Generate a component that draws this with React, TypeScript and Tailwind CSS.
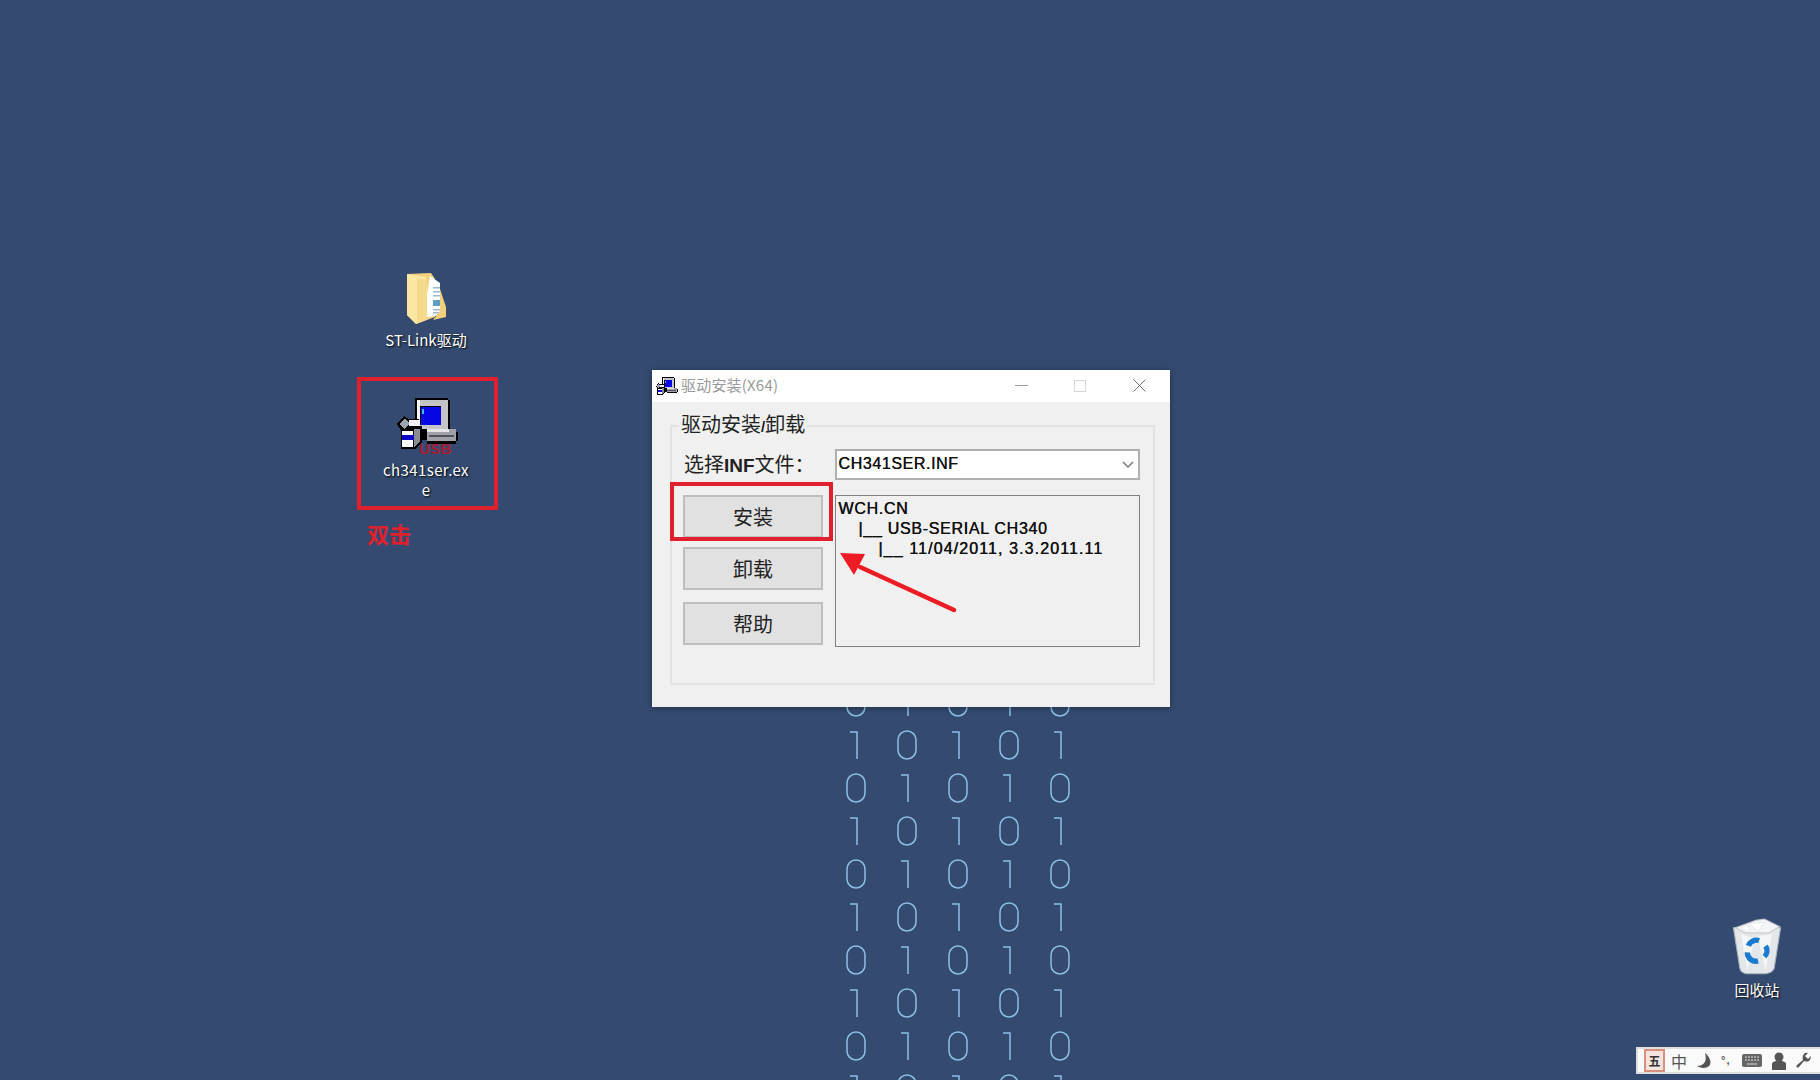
const cjk = "font-['Noto_Sans_CJK_SC','Liberation_Sans',sans-serif]";
const mono = "font-['Liberation_Sans','Noto_Sans_CJK_SC',sans-serif]";

function BinaryRain() {
  const cols = [856, 907, 958, 1009, 1060];
  const rows = Array.from({ length: 11 }, (_, i) => i);
  return (
    <svg className="absolute left-0 top-0" width="1820" height="1080" fill="none" stroke="#8cc0e6" strokeWidth="1.5">
      {rows.map((r) =>
        cols.map((x, c) => {
          const y = 688 + r * 43;
          return (r + c) % 2 === 0 ? (
            <rect key={`${r}-${c}`} x={x - 9} y={y} width="18" height="28" rx="9" />
          ) : (
            <path key={`${r}-${c}`} d={`M${x - 6} ${y + 1}H${x + 1}V${y + 28}`} />
          );
        })
      )}
    </svg>
  );
}

function FolderIcon() {
  return (
    <svg width="60" height="65" viewBox="0 0 60 65">
      <path d="M12 9L36 8L40 14V52L21 59L12 50Z" fill="#f3d27f" />
      <path d="M35 11L45 18V50L28 53Z" fill="#fff" />
      <path d="M38 22h7v1.5h-7zM38 26h7v1.5h-7zM38 30h7v1.5h-7zM38 44h8v1.5h-8zM38 47h8v1.5h-8z" fill="#9db8cf" />
      <path d="M38 35h8v6h-8z" fill="#5f9fc7" />
      <path d="M12 9L31 12V55L21 59L12 50Z" fill="#fbe6a2" />
      <path d="M22 13L32 15V54L22 58Z" fill="#f6da8c" />
      <path d="M45 24L51 42V52L38 55L45 46Z" fill="#f0cf78" />
    </svg>
  );
}

function SetupGlyph() {
  // the old 16-colour installer icon, monitor with a box in front
  return (
    <g shapeRendering="crispEdges">
      <path d="M30 13h33v2h2v29h6v3h2v9h-2v3H42v-4H32v-7h-2Z" fill="#000" />
      <rect x="32" y="15" width="31" height="29" fill="#c4c4c8" />
      <rect x="32" y="15" width="3" height="29" fill="#f4f4f5" />
      <rect x="35" y="21" width="21" height="19" fill="#000" />
      <rect x="36" y="22" width="20" height="18" fill="#0505e6" />
      <rect x="37" y="24" width="2" height="5" fill="#38bdf8" />
      <rect x="42" y="44" width="29" height="12" fill="#a1a1aa" />
      <rect x="42" y="44" width="22" height="3" fill="#e4e4e7" />
      <rect x="44" y="50" width="25" height="2" fill="#52525b" />
      <path d="M12 39l7-8 5 3h10v7h3v17l-7 6H16V46Z" fill="#000" />
      <path d="M14 39l6-6 5 6-6 5Z" fill="#9ca3af" />
      <rect x="24" y="35" width="10" height="6" fill="#f4f4f5" />
      <rect x="17" y="46" width="11" height="5" fill="#fff" />
      <rect x="17" y="50" width="14" height="5" fill="#0a0ac8" />
      <rect x="17" y="55" width="11" height="7" fill="#fff" />
      <path d="M29 44h6v12l-6 6Z" fill="#8b8b94" />
    </g>
  );
}

function SetupIcon() {
  return (
    <div className="relative h-[70px] w-[80px]">
      <svg width="80" height="70" viewBox="0 0 80 70">
        <SetupGlyph />
      </svg>
      <span className={`absolute left-[34px] top-[56px] text-[15px] leading-[15px] font-bold tracking-[0.5px] text-[#a81c34] ${mono}`}>
        USB
      </span>
    </div>
  );
}

function RecycleBin() {
  return (
    <svg width="54" height="60" viewBox="0 0 50 56">
      <path d="M3 10L9 48Q10 52 15 53H33Q39 52 41 48L47 10Z" fill="#e4e7ea" stroke="#aab2b9" strokeWidth="1" />
      <path d="M5 10L24 3L32 2L46 9L36 15L14 15Z" fill="#f4f5f6" stroke="#c2c7cc" strokeWidth="1" />
      <path d="M10 16L16 50L23 20ZM26 18L33 50L39 16Z" fill="#f4f5f7" />
      <path d="M18 6l8 8 6-9ZM10 10l9 5-3-8Z" fill="#fff" stroke="#d4d8dc" strokeWidth="0.5" />
      <g fill="none" stroke="#1a7ad0" strokeWidth="5">
        <path d="M17 27A8 8 0 0 1 27 22" />
        <path d="M33 27A8 8 0 0 1 32 37" />
        <path d="M26 41A8 8 0 0 1 16 33" />
      </g>
    </svg>
  );
}

function DesktopLabel({ children, className }: { children: React.ReactNode; className: string }) {
  return (
    <div className={`absolute text-center text-[15px] leading-[20px] text-white [text-shadow:1px_1px_2px_#000] ${cjk} ${className}`}>
      {children}
    </div>
  );
}

function DialogButton({ label, className = "" }: { label: string; className?: string }) {
  return (
    <button className={`flex h-[43px] w-[140px] items-center justify-center border-2 border-[#bebebe] bg-[#e1e1e1] text-[20px] text-[#222] ${cjk} ${className}`}>
      {label}
    </button>
  );
}

function Dialog() {
  return (
    <div className="absolute left-[652px] top-[370px] flex h-[337px] w-[518px] flex-col bg-[#f0f0f0] shadow-[0_1px_6px_rgba(0,0,0,0.35)]">
      <div className="flex h-[32px] items-center bg-white pb-[1px] pl-[4px]">
        <svg width="22" height="21" viewBox="12 10 62 54">
          <SetupGlyph />
        </svg>
        <span className={`ml-[3px] text-[15px] tracking-[0.2px] text-[#999] ${cjk}`}>驱动安装(X64)</span>
        <div className="ml-auto flex items-center pr-[24px]">
          <div className="mr-[46px] h-px w-[13px] bg-[#9a9a9a]" />
          <div className="mr-[47px] h-[12px] w-[12px] border border-[#d8d8d8]" />
          <svg width="13" height="13" viewBox="0 0 13 13" stroke="#777" strokeWidth="1">
            <path d="M.5.5l12 12M12.5.5l-12 12" />
          </svg>
        </div>
      </div>
      <div className="relative mx-[18px] mt-[23px] h-[260px] w-[485px] border-2 border-[#e3e3e3] pl-[11px] pr-[13px] pt-[22px]">
        <div className={`absolute left-[7px] top-[-17px] bg-[#f0f0f0] px-[2px] text-[20px] leading-[28px] text-[#222] ${cjk}`}>
          驱动安装<span className={`font-bold text-[15px] ${mono}`}>/</span>卸载
        </div>
        <div className="flex items-center">
          <div className={`w-[153px] pl-[1px] text-[20px] leading-[28px] text-[#222] ${cjk}`}>
            选择<span className={`font-bold text-[19px] ${mono}`}>INF</span>文件：
          </div>
          <div className={`flex h-[31px] w-[306px] items-center justify-between border-2 border-[#b0b0b0] bg-white pb-[2px] pl-[1px] pr-[4px] text-[16px] tracking-[0.6px] text-[#111] [text-shadow:0.4px_0_0_#111] ${mono}`}>
            CH341SER.INF
            <svg className="mt-[2px]" width="12" height="8" viewBox="0 0 12 8" fill="none" stroke="#777" strokeWidth="1.5">
              <path d="M1 1l5 5 5-5" />
            </svg>
          </div>
        </div>
        <div className="mt-[15px] flex">
          <div className="flex w-[153px] flex-col gap-[12px]">
            <DialogButton label="安装" className="mb-[-3px]" />
            <DialogButton label="卸载" />
            <DialogButton label="帮助" />
          </div>
          <div className={`h-[152px] w-[306px] border border-[#808080] pl-[2px] pt-[3px] text-[16px] leading-[20px] tracking-[0.7px] text-[#111] [text-shadow:0.4px_0_0_#111] ${mono}`}>
            <div>WCH.CN</div>
            <div className="pl-[20px]">|__ USB-SERIAL CH340</div>
            <div className="pl-[40px] tracking-[1.1px]">|__ 11/04/2011, 3.3.2011.11</div>
          </div>
        </div>
      </div>
    </div>
  );
}

function TrayBar() {
  return (
    <div className="absolute left-[1636px] top-[1047px] flex h-[27px] w-[184px] items-center border-2 border-r-0 border-[#dedede] bg-[#fafafa] pl-[6px] text-[#555]">
      <div className={`flex h-[23px] w-[21px] items-center justify-center border-2 border-[#dc8f7c] bg-[#f4e4df] text-[12px] font-bold leading-none text-[#333] ${cjk}`}>
        五
      </div>
      <span className={`ml-[6px] w-[18px] text-[16px] leading-none ${cjk}`}>中</span>
      <svg className="ml-[7px]" width="18" height="18" viewBox="0 0 18 18" fill="#555">
        <path d="M9 1C12 3 17 10 13 14C10 17 4 16 1 14C6 14 12 11 9 1Z" />
      </svg>
      <span className={`ml-[7px] w-[16px] text-[11px] font-bold leading-none tracking-[1px] ${mono}`}>°,</span>
      <svg className="ml-[5px]" width="20" height="14" viewBox="0 0 20 14">
        <rect width="20" height="13" rx="2" fill="#666" />
        <path d="M3 3h14M3 6h14" stroke="#ddd" strokeWidth="1" strokeDasharray="2 1" />
        <path d="M5 10h10" stroke="#ddd" strokeWidth="1" />
      </svg>
      <svg className="ml-[9px]" width="16" height="18" viewBox="0 0 16 18" fill="#555">
        <circle cx="8" cy="5" r="4.5" />
        <path d="M1 18V12Q1 10 5 9H11Q15 10 15 12V18Z" />
      </svg>
      <svg className="ml-[8px]" width="17" height="17" viewBox="0 0 17 17" fill="#555">
        <path d="M16 4l-3 3-3-3 3-3Q9 0 8 4Q7 6 8 8L1 14L3 16L9 9Q12 10 14 9Q16 7 16 4Z" />
      </svg>
    </div>
  );
}

export default function App() {
  return (
    <div className="relative h-[1080px] w-[1820px] overflow-hidden bg-[#344a70]">
      <BinaryRain />

      <div className="absolute left-[395px] top-[265px]">
        <FolderIcon />
      </div>
      <DesktopLabel className="left-[366px] top-[330px] w-[120px]">ST-Link驱动</DesktopLabel>

      <div className="absolute left-[385px] top-[385px]">
        <SetupIcon />
      </div>
      <DesktopLabel className="left-[381px] top-[460px] w-[90px] break-all tracking-[0.4px]">ch341ser.exe</DesktopLabel>

      <div className="absolute left-[357px] top-[377px] h-[133px] w-[141px] border-4 border-[#e0202c]" />
      <div className={`absolute left-[367px] top-[518px] text-[22px] font-bold leading-[30px] text-[#e0202c] ${cjk}`}>双击</div>

      <Dialog />

      <div className="absolute left-[670px] top-[482px] h-[59px] w-[163px] border-4 border-[#e0202c]" />
      <svg className="absolute left-[830px] top-[545px]" width="135" height="75" viewBox="0 0 135 75">
        <path d="M30 22L124 65" stroke="#ed1c24" strokeWidth="4.5" strokeLinecap="round" />
        <path d="M10 8L35 9L24 30Z" fill="#ed1c24" />
      </svg>

      <div className="absolute left-[1730px] top-[917px]">
        <RecycleBin />
      </div>
      <DesktopLabel className="left-[1717px] top-[980px] w-[80px]">回收站</DesktopLabel>

      <TrayBar />
    </div>
  );
}
